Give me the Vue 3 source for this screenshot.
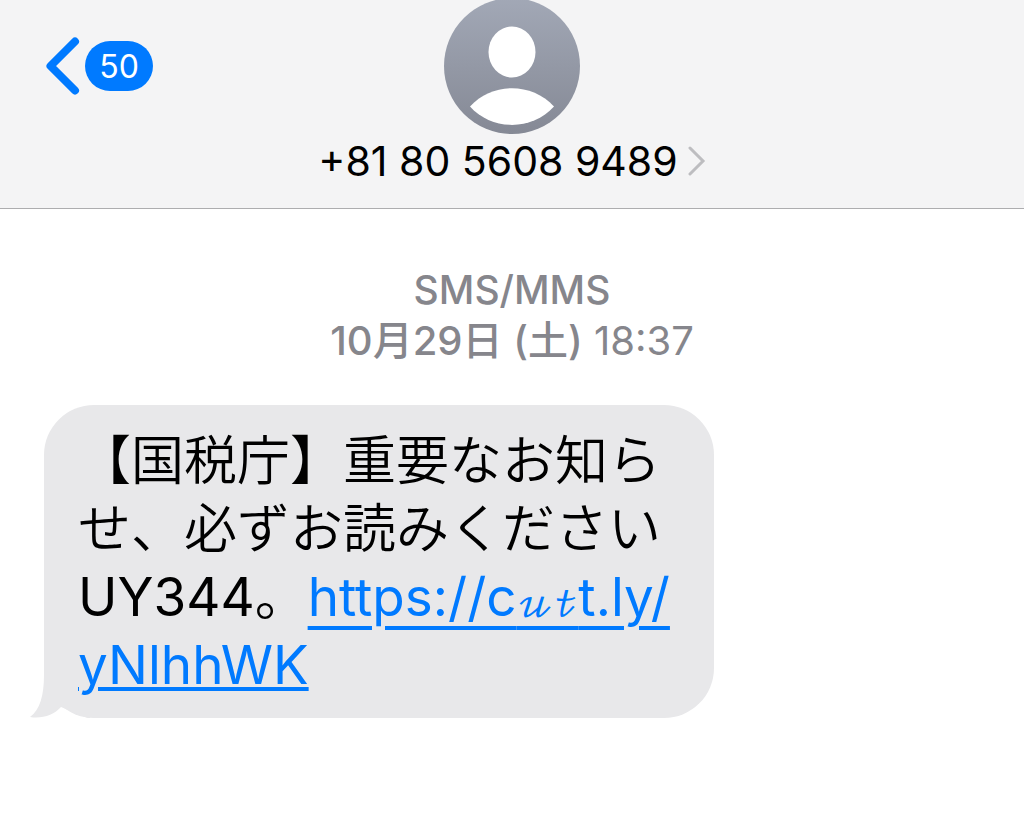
<script setup>
import { ref } from 'vue'

const unread = ref(50)
const phone = '+81 80 5608 9489'
</script>

<template>
  <div class="screen">
    <header class="bar">
      <button class="back" type="button" aria-label="Back">
        <svg class="back-icon" viewBox="0 0 34 58" aria-hidden="true">
          <path d="M29 4.5 4.5 29 29 53.5" />
        </svg>
        <span class="badge">{{ unread }}</span>
      </button>
      <button class="contact" type="button">
        <svg class="avatar" viewBox="0 0 136 136" aria-hidden="true">
          <defs>
            <linearGradient id="shade" x1="0" y1="0" x2="0" y2="1">
              <stop offset="0" stop-color="#a2a8b6" />
              <stop offset="1" stop-color="#858995" />
            </linearGradient>
          </defs>
          <circle cx="68" cy="68" r="68" fill="url(#shade)" />
          <ellipse cx="68" cy="54" rx="23.5" ry="25.5" fill="#fff" />
          <path d="M26 108.500C48 84 88 84 110 108.500C88 133 48 133 26 108.500Z" fill="#fff" />
        </svg>
        <span class="name">
          {{ phone }}
          <svg class="chevron" viewBox="0 0 18 30" aria-hidden="true">
            <path d="M2 2 15 15 2 28" />
          </svg>
        </span>
      </button>
    </header>

    <main class="thread">
      <p class="stamp">
        <span class="kind">SMS/MMS</span><br />
        <b>10月29日 (土)</b> 18:37
      </p>
      <div class="bubble">
        <svg class="tail" viewBox="0 0 60 50" aria-hidden="true">
          <path d="M14 0V6C14 26 10 41 0 48C12 50 24 46 31 38L60 50V0Z" />
        </svg>
        <p class="message">
          【国税庁】重要なお知ら<br />せ、必ずお読みください<br /><span class="latin">UY344</span>。<a class="latin" href="#"><span class="low">https://c<span class="script">𝓊𝓉</span>t.ly/</span><br /><span class="high">yNlhhWK</span></a>
        </p>
      </div>
    </main>
  </div>
</template>

<style>
body {
  margin: 0;
  background: #fff;
}
</style>

<style scoped>
.screen {
  font-family: Inter, "Noto Sans CJK JP", sans-serif;
  color: #000;
}
.bar {
  display: grid;
  grid-template-columns: 1fr auto 1fr;
  align-items: start;
  height: 208px;
  background: #f4f4f5;
  border-bottom: 1px solid #adadaf;
}
button {
  margin: 0;
  padding: 0;
  border: 0;
  background: none;
  font: inherit;
  color: inherit;
}
.back {
  display: flex;
  align-items: center;
  justify-self: start;
  gap: 5px;
  margin: 37px 0 0 46px;
}
.back-icon {
  width: 34px;
  height: 58px;
  fill: none;
  stroke: #007aff;
  stroke-width: 8;
  stroke-linecap: round;
  stroke-linejoin: round;
}
.badge {
  min-width: 68px;
  box-sizing: border-box;
  padding-top: 2px;
  border-radius: 25px;
  background: #007aff;
  color: #fff;
  font-size: 32px;
  line-height: 48px;
}
.contact {
  display: flex;
  flex-direction: column;
  align-items: center;
}
.avatar {
  width: 136px;
  height: 136px;
  margin-top: -2px;
}
.name {
  display: flex;
  align-items: center;
  gap: 10px;
  font-size: 41px;
  line-height: 54px;
}
.chevron {
  width: 18px;
  height: 30px;
  fill: none;
  stroke: #bdbdc0;
  stroke-width: 3;
  stroke-linecap: round;
}
.stamp {
  margin: 55px 0 39px;
  text-align: center;
  font-size: 40px;
  line-height: 51px;
  color: #86868c;
}
.kind {
  font-size: 39px;
  font-weight: 500;
}
.stamp b {
  font-weight: 500;
}
.bubble {
  position: relative;
  width: fit-content;
  margin-left: 44px;
  padding: 22px 44px 19px 34px;
  border-radius: 50px;
  background: #e8e8ea;
}
.tail {
  position: absolute;
  left: -14px;
  bottom: -1px;
  width: 60px;
  height: 50px;
  fill: #e8e8ea;
}
.message {
  position: relative;
  margin: 0;
  font-size: 53px;
  font-weight: 350;
  line-height: 68px;
  text-spacing-trim: space-all;
}
.latin {
  font-weight: 400;
}
a {
  color: #007aff;
  text-decoration: none;
}
.low,
.high {
  text-decoration: underline;
  text-decoration-thickness: 4px;
  text-underline-offset: 10px;
}
.high {
  text-underline-offset: 3px;
}
.script {
  font-family: "DejaVu Math TeX Gyre", "DejaVu Serif", serif;
  font-size: 38px;
  line-height: 1;
}
</style>
